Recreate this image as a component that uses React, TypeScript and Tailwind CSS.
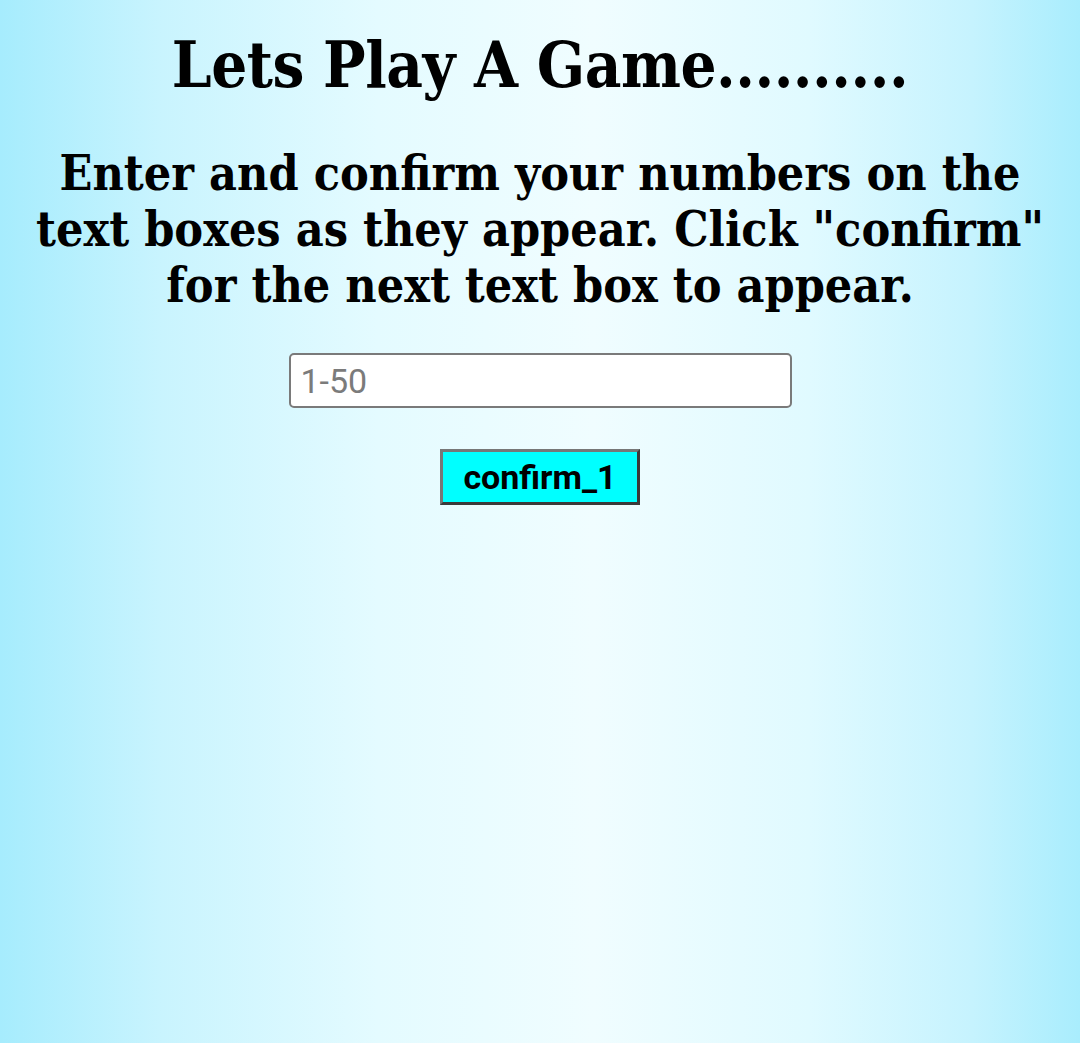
import React from "react";

export default function App() {
  return (
    <div className="w-[1080px] h-[1043px] overflow-hidden bg-[linear-gradient(to_right,#a6ecfd_0%,#c9f4fe_15%,#e4fbff_35%,#f0fdff_55%,#e0faff_75%,#c6f3fe_90%,#a9edfd_100%)]">
      <div className="flex flex-col items-center text-black">
        <h1 className="mt-[27px] text-[63px] leading-[76px] font-bold text-center font-['DejaVu_Serif_Condensed','DejaVu_Serif',serif] tracking-[-0.5px]">
          Lets Play A Game..........
        </h1>
        <p className="mt-[42px] w-[1012px] text-[48px] leading-[56px] font-bold text-center font-['DejaVu_Serif_Condensed','DejaVu_Serif',serif]">
          Enter and confirm your numbers on the text boxes as they appear. Click "confirm" for the next text box to appear.
        </p>
        <input
          type="text"
          placeholder="1-50"
          className="mt-[40px] w-[503px] h-[55px] bg-white border-2 border-[#7a7a7a] rounded-[5px] px-[10px] text-[34px] font-['Roboto',sans-serif] placeholder:text-[#7b7b7b] outline-none"
        />
        <button className="mt-[41px] w-[200px] h-[56px] bg-[#00ffff] border-[3px] border-[#3a3a3a] border-t-[#777] border-l-[#777] text-[34px] font-bold font-['Roboto',sans-serif] text-black leading-none">
          confirm_1
        </button>
      </div>
    </div>
  );
}
